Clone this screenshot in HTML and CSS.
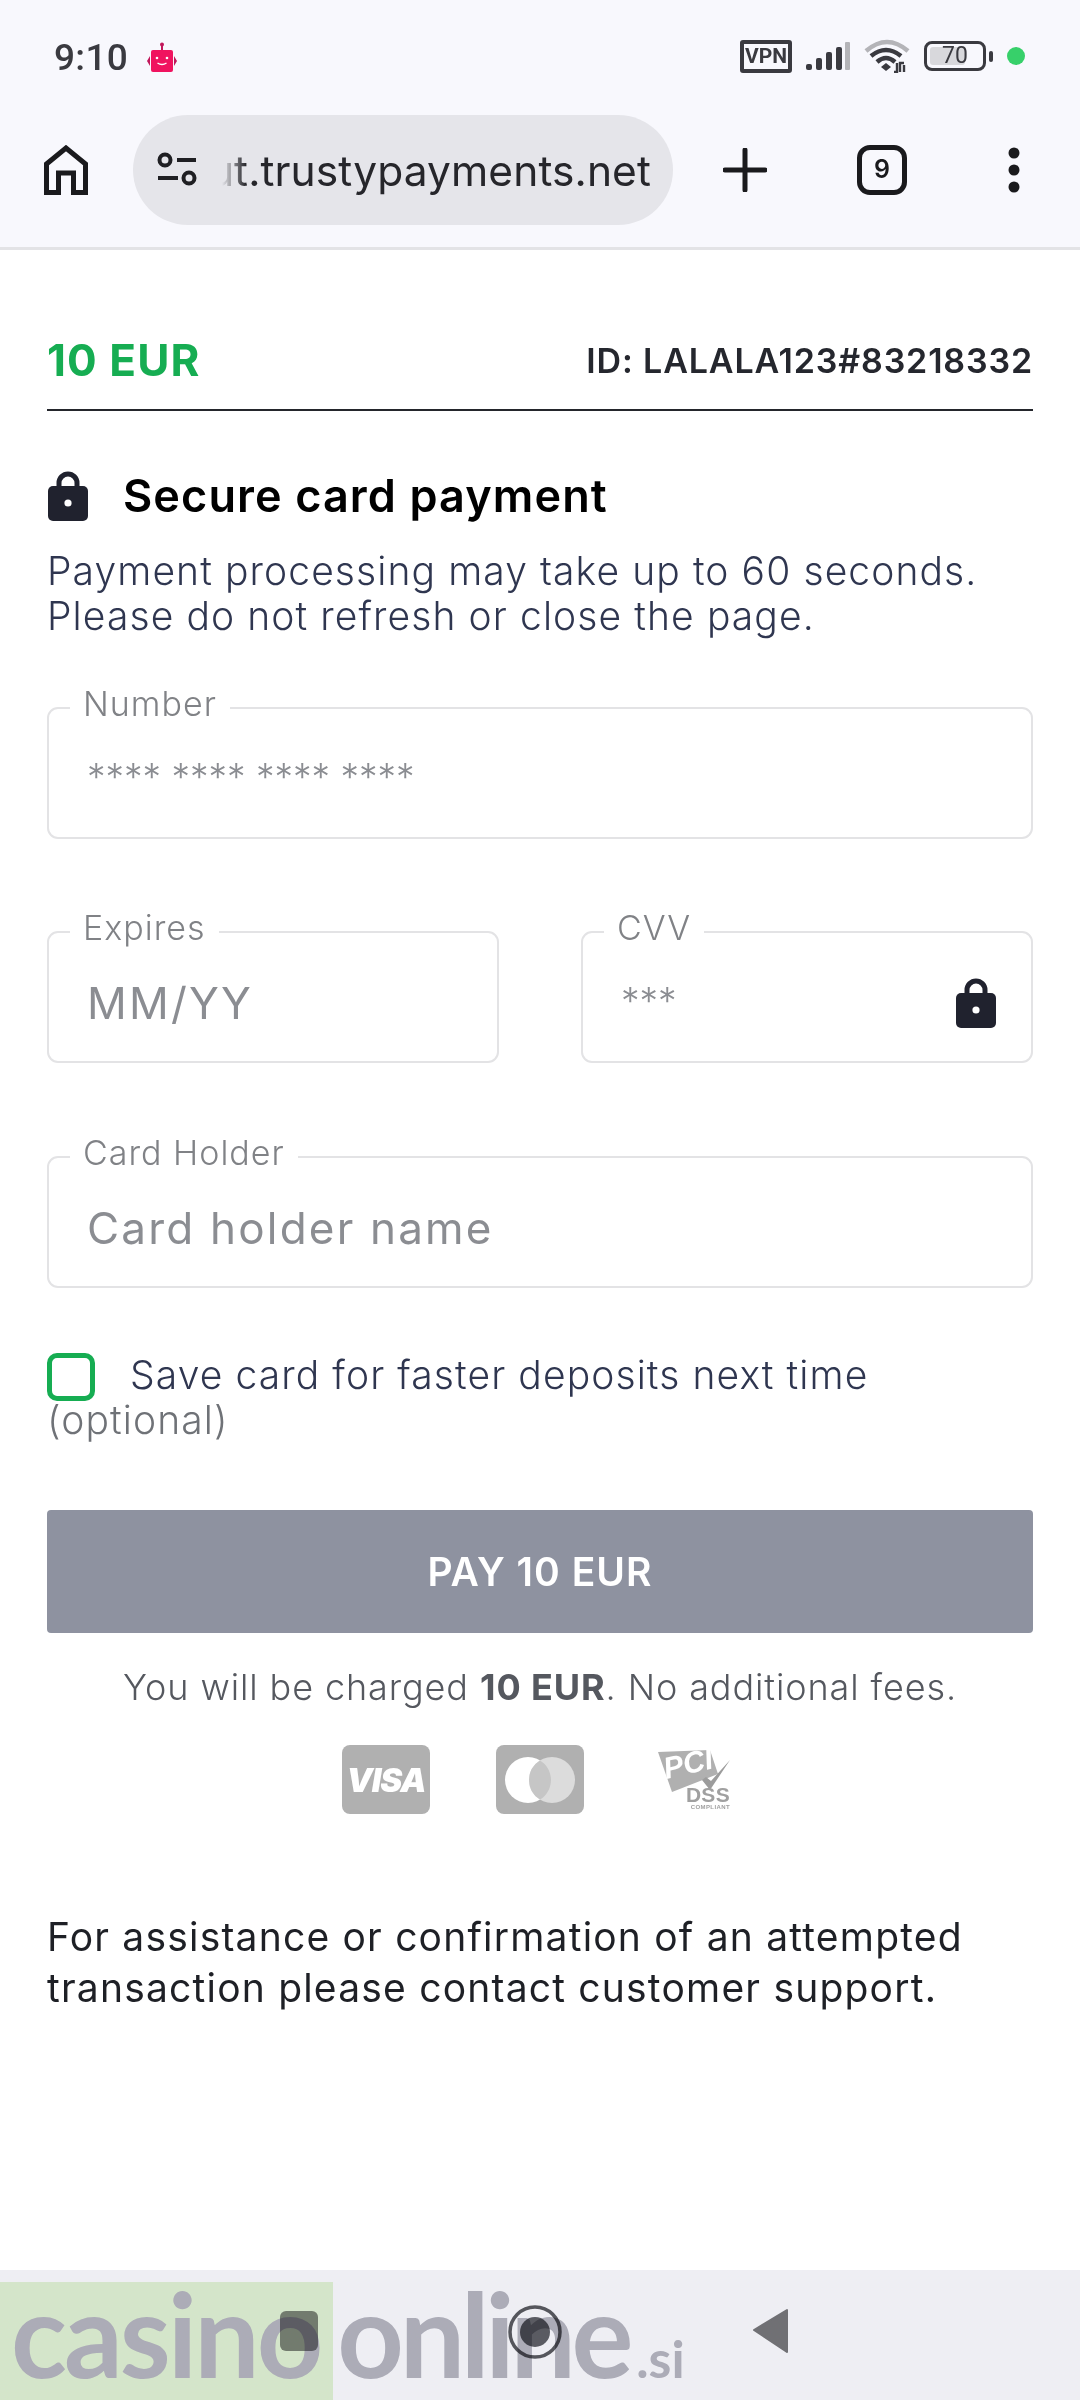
FILE: index.html
```html
<!DOCTYPE html>
<html lang="en">
<head>
    <meta charset="UTF-8">
    <meta name="viewport" content="width=device-width, initial-scale=1.0">
    <title>Secure card payment</title>
    <link rel="stylesheet" href="styles.css">
</head>
<body>
    <!-- Phone status bar -->
    <div class="status-bar">
        <div class="status-left">
            <span class="clock">9:10</span>
            <svg class="robot" width="32" height="30" viewBox="0 0 32 30">
                <circle cx="16" cy="2.5" r="2" fill="#c2185b"/>
                <rect x="15" y="3" width="2" height="6" fill="#c2185b"/>
                <rect x="5" y="8" width="22" height="22" rx="2" fill="#f0135f"/>
                <path d="M4 14 L1 19 L4 24 Z M28 14 L31 19 L28 24 Z" fill="#c2185b"/>
                <circle cx="11" cy="16" r="1.3" fill="#fff"/>
                <circle cx="21" cy="16" r="1.3" fill="#fff"/>
                <path d="M11.5 21 Q16 24 20.5 21" fill="none" stroke="#fff" stroke-width="1.4"/>
            </svg>
        </div>
        <div class="status-right">
            <span class="vpn">VPN</span>
            <svg width="44" height="28" viewBox="0 0 44 28">
                <rect x="0" y="22" width="6" height="6" rx="2" fill="#3a3a40"/>
                <rect x="10" y="16" width="6" height="12" rx="2" fill="#3a3a40"/>
                <rect x="20" y="10" width="6" height="18" rx="2" fill="#3a3a40"/>
                <rect x="30" y="5" width="6" height="23" rx="2" fill="#3a3a40"/>
                <rect x="39" y="0" width="5" height="28" rx="1" fill="#b4b4b8"/>
            </svg>
            <svg width="46" height="34" viewBox="0 0 46 34">
                <path d="M2 12 Q23 -6 44 12" fill="none" stroke="#b4b4b8" stroke-width="4.5"/>
                <path d="M7 17 Q22 5 37 17" fill="none" stroke="#3a3a40" stroke-width="4.5"/>
                <path d="M13 23 Q22 15 31 23" fill="none" stroke="#3a3a40" stroke-width="4.5"/>
                <path d="M17 28 L22 24 L27 28 L22 32 Z" fill="#3a3a40"/>
                <path d="M33 24 V33 L30 33 M36 33 V24 L40 24 M40 33 V26" fill="none" stroke="#3a3a40" stroke-width="2.4"/>
            </svg>
            <div class="battery">
                <div class="battery-body">
                    <div class="battery-fill"></div>
                    <span class="battery-num">70</span>
                </div>
                <div class="battery-tip"></div>
            </div>
            <div class="dot"></div>
        </div>
    </div>

    <!-- Browser toolbar -->
    <div class="toolbar">
        <svg class="home" width="44" height="50" viewBox="0 0 44 50">
            <path d="M2.5 47.5 V19 L22 3 L41.5 19 V47.5 H29.5 V28 H14.5 V47.5 Z" fill="none" stroke="#1a1a1d" stroke-width="5"/>
        </svg>
        <div class="url-bar">
            <svg width="40" height="36" viewBox="0 0 40 36">
                <circle cx="8" cy="8" r="5.5" fill="none" stroke="#1f1f23" stroke-width="4"/>
                <rect x="20" y="6" width="19" height="4" fill="#1f1f23"/>
                <rect x="1" y="24" width="20" height="4" fill="#1f1f23"/>
                <circle cx="32" cy="26" r="5.5" fill="none" stroke="#1f1f23" stroke-width="4"/>
            </svg>
            <div class="url-text"><span>ut.trustypayments.net</span></div>
        </div>
        <svg class="plus" width="44" height="44" viewBox="0 0 44 44">
            <path d="M22 2 V42 M2 22 H42" stroke="#1a1a1d" stroke-width="5" stroke-linecap="round"/>
        </svg>
        <div class="tabs">9</div>
        <svg class="more" width="12" height="46" viewBox="0 0 12 46">
            <circle cx="6" cy="6" r="5.5" fill="#1a1a1d"/>
            <circle cx="6" cy="23" r="5.5" fill="#1a1a1d"/>
            <circle cx="6" cy="40" r="5.5" fill="#1a1a1d"/>
        </svg>
    </div>

    <!-- Payment form -->
    <div class="page">
        <div class="summary">
            <span class="amount">10 EUR</span>
            <span class="order-id">ID: LALALA123#83218332</span>
        </div>

        <div class="secure-title">
            <svg class="lock" width="42" height="50" viewBox="0 0 42 50">
                <path d="M12 18 V12 a9 9 0 0 1 18 0 V18" fill="none" stroke="#20222e" stroke-width="5"/>
                <rect x="1" y="15" width="40" height="35" rx="5" fill="#20222e"/>
                <circle cx="21" cy="32" r="3.6" fill="#fff"/>
            </svg>
            <h1>Secure card payment</h1>
        </div>
        <p class="notice">Payment processing may take up to 60 seconds.<br>Please do not refresh or close the page.</p>

        <fieldset class="field field-number">
            <legend>Number</legend>
            <input class="stars" type="text" placeholder="**** **** **** ****">
        </fieldset>

        <div class="field-row">
            <fieldset class="field">
                <legend>Expires</legend>
                <input type="text" placeholder="MM/YY">
            </fieldset>
            <fieldset class="field">
                <legend>CVV</legend>
                <input class="stars" type="text" placeholder="***">
                <svg class="lock" width="42" height="50" viewBox="0 0 42 50">
                    <path d="M12 18 V12 a9 9 0 0 1 18 0 V18" fill="none" stroke="#20222e" stroke-width="5"/>
                    <rect x="1" y="15" width="40" height="35" rx="5" fill="#20222e"/>
                    <circle cx="21" cy="32" r="3.6" fill="#fff"/>
                </svg>
            </fieldset>
        </div>

        <fieldset class="field">
            <legend>Card Holder</legend>
            <input type="text" placeholder="Card holder name">
        </fieldset>

        <p class="save-card"><span class="checkbox"></span>Save card for faster deposits next time <span class="optional">(optional)</span></p>

        <button class="pay-btn">PAY 10 EUR</button>
        <p class="fees">You will be charged <b>10 EUR</b>. No additional fees.</p>

        <div class="logos">
            <div class="logo-card visa">VISA</div>
            <div class="logo-card">
                <svg width="72" height="48" viewBox="0 0 72 48">
                    <circle cx="24" cy="24" r="23" fill="#fff"/>
                    <circle cx="48" cy="24" r="23" fill="#dcdcdc"/>
                    <path d="M36 4.4 a23 23 0 0 1 0 39.2 a23 23 0 0 1 -11 -19.6 a23 23 0 0 1 11 -19.6 Z" fill="#c6c6c6"/>
                </svg>
            </div>
            <div class="pci">
                <svg width="74" height="46" viewBox="0 0 74 46">
                    <path d="M0 2 L52 0 L60 24 L14 42 Z" fill="#b0b0b0"/>
                    <text x="8" y="29" transform="rotate(-13 8 29)" class="pci-text">PCI</text>
                    <path d="M44 30 L52 40 L72 10 L53 31 L48 27 Z" fill="#9c9c9c"/>
                </svg>
                <div class="dss">DSS</div>
                <div class="compliant">COMPLIANT</div>
            </div>
        </div>

        <p class="support">For assistance or confirmation of an attempted transaction please contact customer support.</p>
    </div>

    <!-- Phone navigation bar -->
    <div class="nav-bar">
        <div class="nav-square"></div>
        <svg width="56" height="56" viewBox="0 0 56 56">
            <circle cx="28" cy="28" r="25" fill="none" stroke="#55565c" stroke-width="3.5"/>
            <circle cx="28" cy="28" r="15" fill="#5a5b62"/>
        </svg>
        <svg width="36" height="46" viewBox="0 0 36 46">
            <path d="M35 2 V44 L2 22 Z" fill="#707074" stroke="#707074" stroke-width="2" stroke-linejoin="round"/>
        </svg>
    </div>

    <!-- Watermark over the nav bar -->
    <div class="watermark">
        <div class="wm-green"></div>
        <div class="wm-text"><span class="wm-casino">casino</span><span class="wm-online">online</span><span class="wm-si">.si</span></div>
    </div>
</body>
</html>
```

FILE: styles.css
```css
* {
    box-sizing: border-box;
}
body {
    margin: 0;
    width: 1080px;
    height: 2400px;
    position: relative;
    overflow: hidden;
    background-color: #fff;
    font-family: Inter, "Noto Sans", sans-serif;
    color: #2f3650;
}

/* status bar */
.status-bar {
    height: 115px;
    padding: 40px 0 0 54px;
    background-color: #f8f8fd;
    display: flex;
    justify-content: space-between;
    align-items: flex-start;
}
.status-left {
    display: flex;
    align-items: center;
    gap: 18px;
    height: 34px;
}
.clock {
    font-family: Roboto, sans-serif;
    font-size: 37px;
    font-weight: 500;
    letter-spacing: 0.3px;
    color: #3a3a40;
}
.status-right {
    display: flex;
    align-items: center;
    gap: 14px;
    height: 32px;
    padding-right: 55px;
}
.vpn {
    width: 52px;
    height: 33px;
    border: 4px solid #3a3a40;
    border-radius: 3px;
    font-family: Roboto, sans-serif;
    font-size: 21px;
    font-weight: 700;
    line-height: 25px;
    text-align: center;
    color: #3a3a40;
}
.battery {
    display: flex;
    align-items: center;
    gap: 3px;
}
.battery-body {
    width: 62px;
    height: 30px;
    border: 3px solid #3a3a40;
    border-radius: 8px;
    position: relative;
    padding: 3px;
}
.battery-fill {
    width: 70%;
    height: 100%;
    background-color: #d8d8dc;
    border-radius: 3px;
}
.battery-num {
    position: absolute;
    left: 0;
    right: 0;
    top: -2px;
    text-align: center;
    font-family: Roboto, sans-serif;
    font-size: 23px;
    color: #3a3a40;
}
.battery-tip {
    width: 4px;
    height: 11px;
    background-color: #3a3a40;
    border-radius: 2px;
}
.dot {
    width: 18px;
    height: 18px;
    border-radius: 50%;
    background-color: #37d06a;
}

/* browser toolbar */
.toolbar {
    height: 135px;
    padding: 0 0 22px 44px;
    background-color: #f8f8fd;
    border-bottom: 3px solid #e3e3e6;
    display: flex;
    align-items: center;
}
.url-bar {
    width: 540px;
    height: 110px;
    margin-left: 45px;
    padding: 0 22px 0 24px;
    background-color: #e5e5ea;
    border-radius: 55px;
    display: flex;
    align-items: center;
    gap: 25px;
}
.url-bar svg {
    flex-shrink: 0;
}
.url-text {
    flex: 1;
    min-width: 0;
    overflow: hidden;
    display: flex;
    justify-content: flex-end;
    font-size: 42.5px;
    letter-spacing: 0.1px;
    color: #26262b;
    white-space: nowrap;
    -webkit-mask-image: linear-gradient(to right, transparent 0, #000 24px);
    mask-image: linear-gradient(to right, transparent 0, #000 24px);
}
.plus {
    margin-left: 50px;
}
.tabs {
    width: 50px;
    height: 50px;
    margin-left: 90px;
    border: 5px solid #1a1a1d;
    border-radius: 13px;
    font-size: 25px;
    font-weight: 600;
    line-height: 38px;
    text-align: center;
    color: #1a1a1d;
}
.more {
    margin-left: 101px;
}

/* payment form */
.page {
    padding: 0 47px;
}
.summary {
    height: 161px;
    padding-top: 61px;
    border-bottom: 2px solid #24262c;
    display: flex;
    justify-content: space-between;
    align-items: center;
}
.amount {
    font-size: 44px;
    font-weight: 700;
    letter-spacing: 1.1px;
    color: #16ad52;
}
.order-id {
    font-size: 34px;
    font-weight: 600;
    letter-spacing: 0.85px;
    color: #25272e;
}
.secure-title {
    margin-top: 57px;
    display: flex;
    align-items: center;
    gap: 34px;
}
.secure-title .lock {
    flex-shrink: 0;
}
h1 {
    margin: 0;
    font-size: 45px;
    font-weight: 600;
    letter-spacing: 1.1px;
    color: #000;
}
.notice {
    margin: 25px 0 0;
    font-size: 39px;
    line-height: 45px;
    font-weight: 300;
    letter-spacing: 1.1px;
}
.field {
    display: flex;
    align-items: flex-start;
    margin: 0;
    min-width: 0;
    height: 152px;
    padding: 0 34px 0 21px;
    border: 2px solid #e3e3e5;
    border-radius: 11px;
}
.field legend {
    padding: 0 13px 8px;
    font-size: 34px;
    line-height: 34px;
    font-weight: 300;
    letter-spacing: 1px;
    color: #808286;
}
.field input {
    flex: 1;
    min-width: 0;
    height: 100px;
    padding: 0 0 0 17px;
    margin-top: 0;
    border: none;
    outline: none;
    background: transparent;
    font-family: inherit;
    font-size: 44px;
    font-weight: 400;
    letter-spacing: 2.2px;
}
.field input::placeholder {
    color: #8b8d92;
    opacity: 1;
}
.field input.stars {
    font-size: 37px;
    font-weight: 300;
    letter-spacing: 0;
    height: 82px;
    margin-top: 6px;
}
.field .lock {
    margin-top: 25px;
    flex-shrink: 0;
}
.field-number {
    margin-top: 49px;
}
.field-row {
    margin: 72px 0 73px;
    display: flex;
    justify-content: space-between;
}
.field-row .field {
    width: 452px;
}
.save-card {
    margin: 64px 0 0;
    font-size: 39px;
    line-height: 45px;
    font-weight: 300;
    letter-spacing: 1.1px;
}
.checkbox {
    display: inline-block;
    width: 48px;
    height: 48px;
    margin: -12px 35px -12px 0;
    vertical-align: 0;
    border: 5px solid #16ad52;
    border-radius: 10px;
}
.optional {
    color: #6f7277;
}
.pay-btn {
    display: block;
    width: 100%;
    height: 123px;
    margin-top: 68px;
    border: none;
    border-radius: 4px;
    background-color: #8e92a0;
    color: #fff;
    font-family: inherit;
    font-size: 39px;
    font-weight: 600;
    letter-spacing: 1px;
}
.fees {
    margin: 34px 0 0;
    text-align: center;
    font-size: 36px;
    line-height: 40px;
    font-weight: 300;
    letter-spacing: 0.9px;
    color: #55585f;
}
.fees b {
    font-weight: 700;
}
.logos {
    margin-top: 38px;
    padding-left: 295px;
    display: flex;
    align-items: flex-start;
    gap: 66px;
}
.logo-card {
    width: 88px;
    height: 69px;
    border-radius: 8px;
    background-color: #b0b0b0;
    display: flex;
    align-items: center;
    justify-content: center;
}
.visa {
    font-size: 33px;
    font-weight: 900;
    font-style: italic;
    letter-spacing: -1px;
    color: #fff;
}
.pci {
    width: 74px;
    margin: 5px 0 0 8px;
    text-align: right;
    color: #a0a0a0;
    font-family: "Liberation Sans", sans-serif;
    font-weight: 700;
}
.pci svg {
    display: block;
}
.pci-text {
    font-family: "Liberation Sans", sans-serif;
    font-size: 30px;
    font-style: italic;
    font-weight: 700;
    fill: #fff;
}
.dss {
    margin-top: -10px;
    padding-right: 2px;
    font-size: 21px;
    line-height: 18px;
    letter-spacing: 0.3px;
}
.compliant {
    padding-right: 2px;
    font-size: 6px;
    line-height: 7px;
    letter-spacing: 0.4px;
}
.support {
    margin: 97px 0 0;
    font-size: 39px;
    line-height: 51px;
    font-weight: 400;
    letter-spacing: 1.2px;
    color: #1e2026;
}

/* nav bar */
.nav-bar {
    position: absolute;
    left: 0;
    right: 0;
    top: 2270px;
    height: 130px;
    background-color: #eeeef3;
    display: flex;
    align-items: flex-start;
    padding: 34px 0 0 280px;
}
.nav-square {
    width: 38px;
    height: 40px;
    margin: 7px 0 0;
    border-radius: 6px;
    background-color: #808084;
}
.nav-bar svg:nth-of-type(1) {
    margin: 0 0 0 189px;
}
.nav-bar svg:nth-of-type(2) {
    margin: 4px 0 0 189px;
}

/* watermark */
.watermark {
    position: absolute;
    left: 0;
    top: 2282px;
    width: 700px;
    height: 118px;
    mix-blend-mode: multiply;
}
.wm-green {
    position: absolute;
    left: 0;
    top: 0;
    bottom: 0;
    width: 333px;
    background-color: #e4f6d4;
}
.wm-text {
    position: absolute;
    left: 11px;
    top: -8px;
    display: flex;
    align-items: baseline;
    font-family: Lato, sans-serif;
    font-size: 116px;
    line-height: 120px;
    font-weight: 700;
    letter-spacing: -3px;
    color: #b8b8c0;
}
.wm-online {
    margin-left: 17px;
    letter-spacing: -4.3px;
}
.wm-si {
    margin-left: 7px;
    font-size: 52px;
    letter-spacing: 0;
}
```
